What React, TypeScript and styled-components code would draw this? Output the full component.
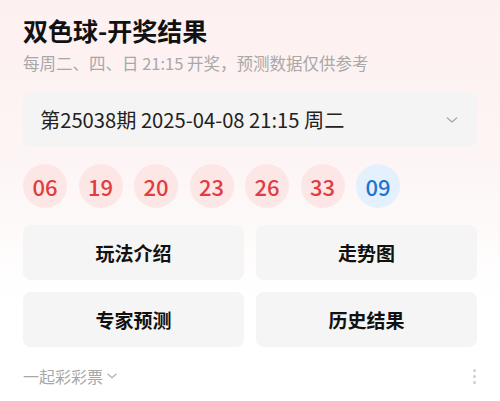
import styled, { createGlobalStyle } from "styled-components";

const GlobalStyle = createGlobalStyle`
  html, body {
    margin: 0;
    padding: 0;
    background: #ffffff;
  }
  body {
    font-family: "Noto Sans CJK SC", "Noto Sans", sans-serif;
  }
`;

const Page = styled.div`
  width: 500px;
  height: 401px;
  box-sizing: border-box;
  padding: 13px 23px 0;
  background: linear-gradient(180deg, #fdf0f0 0%, #fdf5f5 40%, #ffffff 75%);
  overflow: hidden;
`;

const Title = styled.h1`
  margin: 0;
  font-size: 25px;
  line-height: 34px;
  font-weight: 700;
  color: #111;
`;

const Subtitle = styled.div`
  margin-top: 5px;
  font-size: 16.5px;
  line-height: 22px;
  color: #a8a8a8;
`;

const Select = styled.div`
  margin-top: 18px;
  height: 55px;
  border-radius: 8px;
  background: #f4f4f4;
  display: flex;
  align-items: center;
  justify-content: space-between;
  padding: 0 18px 0 17px;
  font-size: 20.2px;
  color: #222;
`;

const Balls = styled.div`
  margin-top: 17px;
  display: flex;
  gap: 11.5px;
`;

const Ball = styled.div<{ $blue?: boolean }>`
  width: 44px;
  height: 44px;
  border-radius: 50%;
  display: flex;
  align-items: center;
  justify-content: center;
  font-size: 22px;
  font-weight: 500;
  color: ${(p) => (p.$blue ? "#1e74d0" : "#df3d40")};
  background: ${(p) => (p.$blue ? "#e4f0fc" : "#fde6e6")};
`;

const Grid = styled.div`
  margin-top: 17px;
  display: grid;
  grid-template-columns: 1fr 1fr;
  gap: 12px;
`;

const Action = styled.div`
  height: 55px;
  border-radius: 8px;
  background: #f5f5f5;
  display: flex;
  align-items: center;
  justify-content: center;
  font-size: 19px;
  font-weight: 700;
  color: #111;
`;

const Footer = styled.div`
  margin-top: 17px;
  display: flex;
  align-items: center;
  justify-content: space-between;
`;

const Brand = styled.div`
  display: flex;
  align-items: center;
  gap: 3px;
  font-size: 16px;
  color: #a8a8a8;
`;

const Dots = styled.div`
  display: flex;
  flex-direction: column;
  gap: 3px;
  margin-right: 1px;

  span {
    width: 3px;
    height: 3px;
    border-radius: 50%;
    background: #cfcfcf;
  }
`;

const Chevron = ({ size, color }: { size: number; color: string }) => (
  <svg width={size} height={size} viewBox="0 0 12 12" fill="none">
    <path d="M2 4.2 L6 7.8 L10 4.2" stroke={color} strokeWidth="1.2" strokeLinecap="round" strokeLinejoin="round" />
  </svg>
);

const reds = ["06", "19", "20", "23", "26", "33"];
const actions = ["玩法介绍", "走势图", "专家预测", "历史结果"];

export default function App() {
  return (
    <>
      <GlobalStyle />
      <Page>
        <Title>双色球-开奖结果</Title>
        <Subtitle>每周二、四、日 21:15 开奖，预测数据仅供参考</Subtitle>
        <Select>
          <span>第25038期 2025-04-08 21:15 周二</span>
          <Chevron size={14} color="#aaa" />
        </Select>
        <Balls>
          {reds.map((n) => (
            <Ball key={n}>{n}</Ball>
          ))}
          <Ball $blue>09</Ball>
        </Balls>
        <Grid>
          {actions.map((a) => (
            <Action key={a}>{a}</Action>
          ))}
        </Grid>
        <Footer>
          <Brand>
            一起彩彩票
            <Chevron size={12} color="#b0b0b0" />
          </Brand>
          <Dots>
            <span />
            <span />
            <span />
          </Dots>
        </Footer>
      </Page>
    </>
  );
}
